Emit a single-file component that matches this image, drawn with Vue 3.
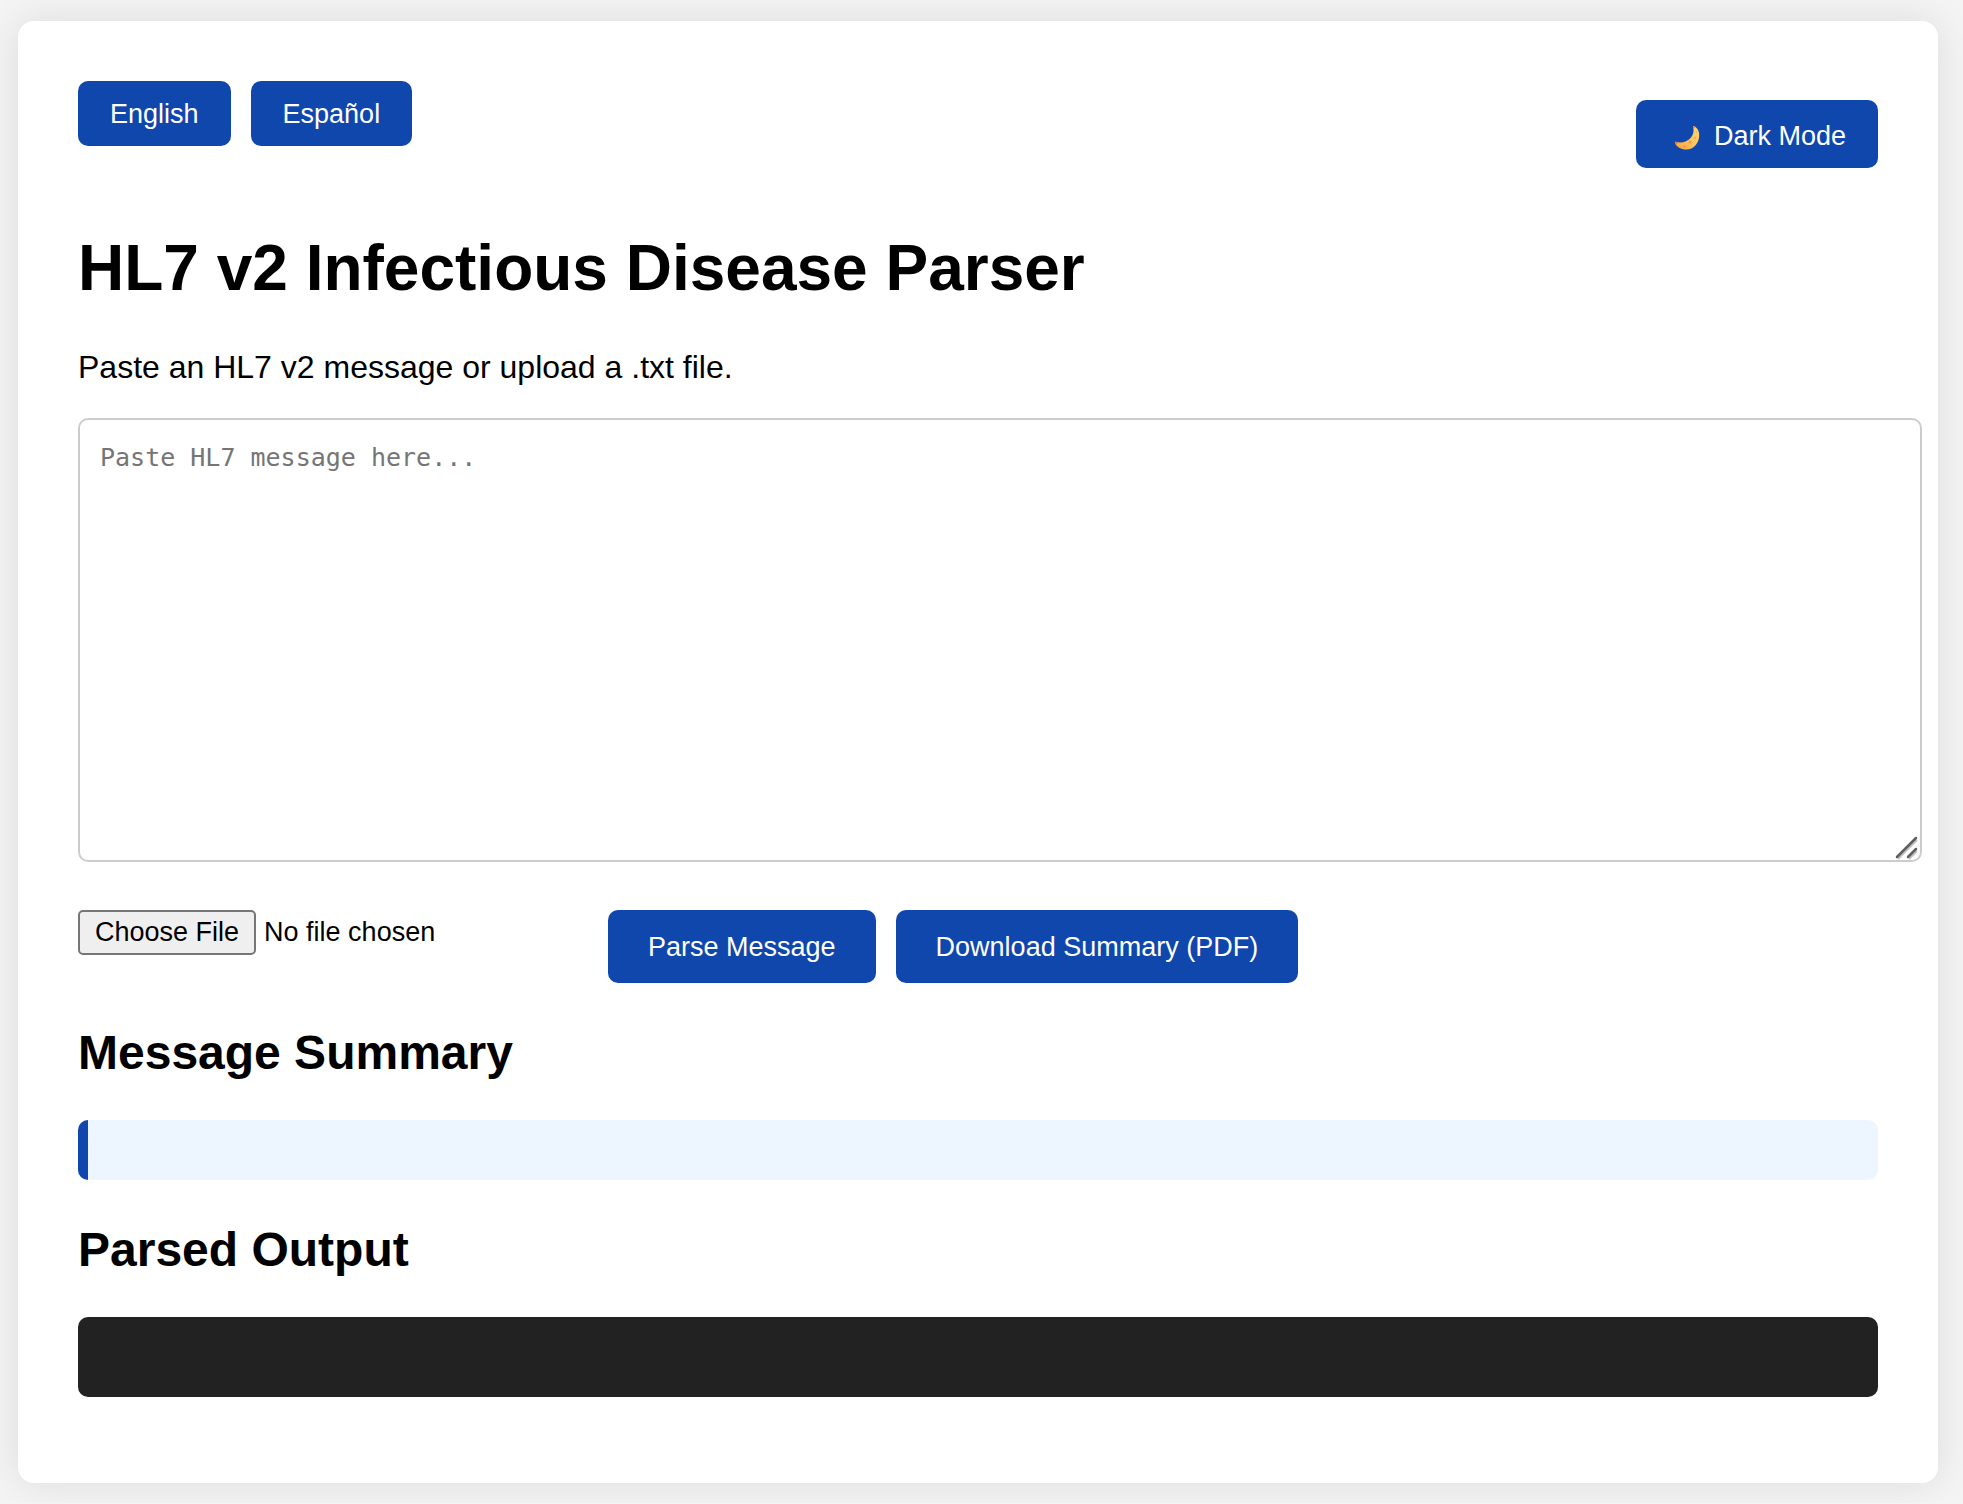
<template>
  <main class="container">
    <!-- Language and theme -->
    <div class="top-bar">
      <div class="lang-switch">
        <button type="button" class="btn" @click="lang = 'en'">English</button>
        <button type="button" class="btn" @click="lang = 'es'">Español</button>
      </div>
      <button type="button" class="btn theme-btn">
        <svg class="moon" viewBox="0 0 36 36" aria-hidden="true">
          <defs>
            <linearGradient id="moonFill" x1="0" y1="1" x2="1" y2="0">
              <stop offset="0" stop-color="#f9a03f" />
              <stop offset="0.5" stop-color="#ffc45c" />
              <stop offset="1" stop-color="#fbd777" />
            </linearGradient>
          </defs>
          <path d="M26 9 C29.500 11 31.500 14 31.200 19 C30.800 26.500 25.500 32.500 18.500 32.500 C13 32.500 8.500 30 7 26 C6.600 24.800 7.600 24.600 8.600 25.100 C14 26.500 19.500 24.500 22.800 20.700 C25.500 17.500 26 14 25.300 10.600 C25 9.400 25.200 8.700 26 9 Z" fill="url(#moonFill)" />
          <path d="M7 26 C6.600 24.800 7.600 24.600 8.600 25.100 L10 25.500 L8.600 27.500 Z M26 9 L27.500 10 L25.500 11.600 C25 9.400 25.200 8.700 26 9 Z" fill="#e5734c" />
          <circle cx="22" cy="25" r="1.600" fill="#e8a44b" />
          <circle cx="27" cy="21" r="1" fill="#e8a44b" />
          <circle cx="16.500" cy="29.500" r="1" fill="#ee8a3c" />
          <circle cx="28.500" cy="15" r="0.800" fill="#e8a44b" />
        </svg>
        <span>{{ t.dark }}</span>
      </button>
    </div>

    <h1>{{ t.title }}</h1>
    <label class="intro" for="hl7Input">{{ t.intro }}</label>

    <div class="message-box">
      <textarea id="hl7Input" v-model="message" :placeholder="t.placeholder"></textarea>
      <svg class="grip" viewBox="0 0 24 24" aria-hidden="true">
        <path d="M3 23 L22 4 M14 23 L22 15" stroke="#c4c4c4" stroke-width="2" />
        <path d="M2 21 L21 2 M13 21 L21 13" stroke="#5f5f5f" stroke-width="2.500" stroke-linecap="round" />
      </svg>
    </div>

    <!-- Actions -->
    <div class="controls">
      <input type="file" accept=".txt" :aria-label="t.upload" @change="loadFile" />
      <button type="button" class="btn action" @click="parseMessage">{{ t.parse }}</button>
      <button type="button" class="btn action">{{ t.download }}</button>
    </div>

    <h2>{{ t.summary }}</h2>
    <div class="summary">{{ summary }}</div>

    <h2>{{ t.output }}</h2>
    <pre class="output">{{ output }}</pre>
  </main>
</template>

<script setup>
import { ref, computed } from 'vue'

const texts = {
  en: {
    dark: 'Dark Mode',
    title: 'HL7 v2 Infectious Disease Parser',
    intro: 'Paste an HL7 v2 message or upload a .txt file.',
    placeholder: 'Paste HL7 message here...',
    upload: 'Upload a .txt file',
    parse: 'Parse Message',
    download: 'Download Summary (PDF)',
    summary: 'Message Summary',
    output: 'Parsed Output'
  },
  es: {
    dark: 'Modo Oscuro',
    title: 'Analizador HL7 v2 de Enfermedades Infecciosas',
    intro: 'Pegue un mensaje HL7 v2 o cargue un archivo .txt.',
    placeholder: 'Pegue el mensaje HL7 aquí...',
    upload: 'Cargar un archivo .txt',
    parse: 'Analizar Mensaje',
    download: 'Descargar Resumen (PDF)',
    summary: 'Resumen del Mensaje',
    output: 'Resultado'
  }
}

const lang = ref('en')
const message = ref('')
const summary = ref('')
const output = ref('')
const t = computed(() => texts[lang.value])

async function loadFile(event) {
  const file = event.target.files[0]
  if (file) message.value = await file.text()
}

function parseMessage() {
  const segments = message.value.split(/\r?\n|\r/).filter(Boolean).map((line) => line.split('|'))
  summary.value = segments.map((fields) => fields[0]).join(', ')
  output.value = JSON.stringify(segments, null, 2)
}
</script>

<style>
body {
  margin: 0;
  background: #f4f4f4;
}
</style>

<style scoped>
.container {
  display: flow-root;
  box-sizing: border-box;
  max-width: 1920px;
  margin: 21px 25px 20px 18px;
  padding: 60px;
  background: white;
  border-radius: 16px;
  box-shadow: 0 0 40px rgba(0, 0, 0, 0.1);
  color: black;
  font-family: Arial, "Liberation Sans", sans-serif;
  font-size: 32px;
}

.top-bar {
  display: flex;
  justify-content: space-between;
  align-items: flex-start;
}

.lang-switch {
  display: flex;
  gap: 20px;
}

.btn {
  padding: 17px 32px 15px;
  background: #1047ad;
  color: white;
  border: none;
  border-radius: 10px;
  font-family: inherit;
  font-size: 27px;
  line-height: 33px;
  cursor: pointer;
}

.theme-btn {
  display: flex;
  align-items: flex-end;
  gap: 10px;
  margin-top: 19px;
}

.moon {
  width: 36px;
  height: 36px;
}

h1 {
  margin: 63px 0 44px;
  font-size: 64px;
  line-height: 74px;
}

.intro {
  display: block;
  margin-bottom: 32px;
  line-height: 37px;
}

/* Message input */
.message-box {
  position: relative;
  width: calc(100% + 44px);
}

textarea {
  display: block;
  box-sizing: border-box;
  width: 100%;
  height: 444px;
  padding: 20px;
  border: 2px solid #ccc;
  border-radius: 10px;
  background: white;
  font-family: Consolas, "DejaVu Sans Mono", monospace;
  font-size: 25px;
  line-height: 35px;
  resize: none;
}

textarea::placeholder {
  color: #757575;
}

.grip {
  position: absolute;
  right: 3px;
  bottom: 2px;
  width: 24px;
  height: 24px;
}

.controls {
  display: flex;
  align-items: flex-start;
  gap: 20px;
  margin-top: 48px;
}

.action {
  padding: 21px 40px 19px;
}

input[type="file"] {
  width: 510px;
  font-family: inherit;
  font-size: 27px;
}

input[type="file"]::file-selector-button {
  margin-right: 8px;
  padding: 4px 15px;
  border: 2px solid #767676;
  border-radius: 5px;
  background: #efefef;
  color: black;
  font-family: inherit;
  font-size: 27px;
  line-height: 33px;
}

h2 {
  margin: 40px 0 39px;
  padding-top: 1px;
  font-size: 48px;
  line-height: 57px;
}

/* Results */
.summary {
  box-sizing: border-box;
  min-height: 60px;
  padding: 30px;
  background: #edf5ff;
  border-left: 10px solid #1047ad;
  border-radius: 10px;
}

.output {
  box-sizing: border-box;
  min-height: 80px;
  margin: 0 0 26px;
  padding: 40px;
  overflow-x: auto;
  background: #222;
  color: #eee;
  border-radius: 10px;
  font-family: "DejaVu Sans Mono", monospace;
  font-size: 25px;
}
</style>
